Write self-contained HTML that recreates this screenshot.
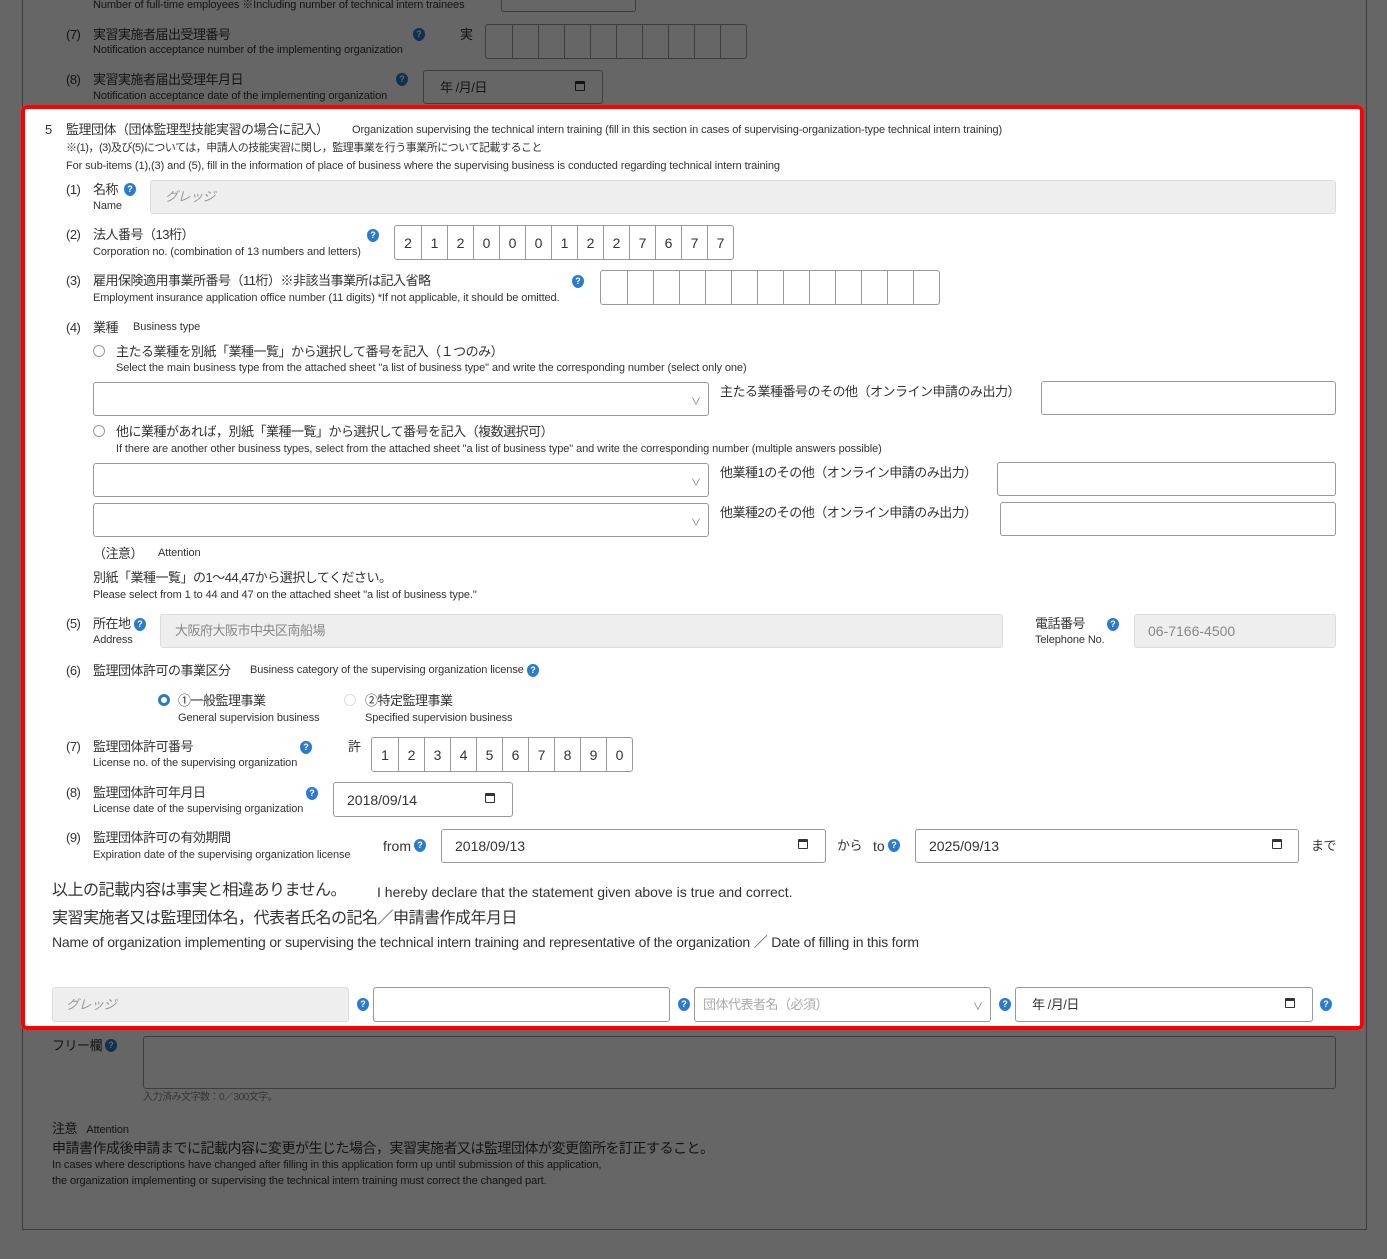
<!DOCTYPE html>
<html><head><meta charset="utf-8">
<style>
*{box-sizing:border-box;margin:0;padding:0}
body{width:1387px;height:1259px;position:relative;overflow:hidden;background:#fff;font-family:"Liberation Sans Narrow","Liberation Sans","Noto Sans CJK JP",sans-serif;color:#333;font-size:13px}
.a{position:absolute;white-space:nowrap;line-height:1}
.s{font-size:11px;letter-spacing:-0.1px}
.j{font-family:"Liberation Sans","Noto Sans CJK JP",sans-serif;font-size:13px;letter-spacing:-0.5px}
.js{font-family:"Liberation Sans","Noto Sans CJK JP",sans-serif;font-size:11px;letter-spacing:-0.5px}
.n{display:inline-block;width:27px}
.box{position:absolute;border:1px solid #999;border-radius:3px;background:#fff}
.g{background:#eee;border-color:#ddd}
.h{position:absolute;width:12px;height:13px;border-radius:50% 50% 50% 50%/45% 45% 55% 55%;background:#2a7bd0;color:#fff;font:bold 9px "Liberation Sans",sans-serif;text-align:center;line-height:13px}
.digits{position:absolute;display:flex;border:1px solid #999;border-radius:3px;background:#fff}
.digits span{width:26px;border-left:1px solid #999;display:flex;align-items:center;justify-content:center;font-size:14px}
.digits span:first-child{border-left:none}
.rad{position:absolute;width:12px;height:12px;border:1px solid #999;border-radius:50%;background:#fff}
.cal{position:absolute;width:10px;height:10px;border:1.5px solid #333;border-top-width:3px;border-radius:1px}
.chev{position:absolute;font-size:10px;color:#777}
.hl{position:absolute;left:21px;top:105px;width:1343px;height:925px;border:4px solid #f00;border-radius:6px;box-shadow:0 0 0 3000px rgba(0,0,0,.6);pointer-events:none}
</style></head><body>

<!-- outside top -->
<div class="box" style="left:501px;top:-6px;width:135px;height:18px"></div>
<div class="a s" style="left:93px;top:0px">Number of full-time employees ※Including number of technical intern trainees</div>
<div class="a j" style="left:66px;top:28px"><span class="n">(7)</span>実習実施者届出受理番号</div>
<div class="a s" style="left:93px;top:45px">Notification acceptance number of the implementing organization</div>
<div class="h" style="left:413px;top:28px">?</div>
<div class="a j" style="left:460px;top:28px">実</div>
<div class="digits" style="left:485px;top:24px;height:35px"><span></span><span></span><span></span><span></span><span></span><span></span><span></span><span></span><span></span><span></span></div>
<div class="a j" style="left:66px;top:73px"><span class="n">(8)</span>実習実施者届出受理年月日</div>
<div class="a s" style="left:93px;top:91px">Notification acceptance date of the implementing organization</div>
<div class="h" style="left:396px;top:73px">?</div>
<div class="box" style="left:423px;top:70px;width:180px;height:34px"></div>
<div class="a j" style="left:440px;top:81px">年 /月/日</div>
<div class="cal" style="left:575px;top:81px"></div>

<!-- outside bottom -->
<div class="a j" style="left:52px;top:1039px">フリー欄</div>
<div class="h" style="left:105px;top:1039px">?</div>
<div class="box" style="left:143px;top:1036px;width:1193px;height:53px"></div>
<div class="a js" style="left:143px;top:1093px;font-size:10px;color:#888">入力済み文字数：0／300文字。</div>
<div class="a j" style="left:52px;top:1122px">注意&nbsp;&nbsp;&nbsp;<span class="s" style="font-family:'Liberation Sans Narrow','Liberation Sans',sans-serif">Attention</span></div>
<div class="a j" style="left:52px;top:1141px;font-size:14px">申請書作成後申請までに記載内容に変更が生じた場合，実習実施者又は監理団体が変更箇所を訂正すること。</div>
<div class="a s" style="left:52px;top:1160px">In cases where descriptions have changed after filling in this application form up until submission of this application,</div>
<div class="a s" style="left:52px;top:1176px">the organization implementing or supervising the technical intern training must correct the changed part.</div>
<div style="position:absolute;left:22px;top:0;width:1345px;height:1230px;border:1px solid #999;border-top:none"></div>

<!-- section 5 -->
<div class="a j" style="left:45px;top:123px"><span style="display:inline-block;width:21px">5</span>監理団体（団体監理型技能実習の場合に記入）</div>
<div class="a s" style="left:352px;top:125px">Organization supervising the technical intern training (fill in this section in cases of supervising-organization-type technical intern training)</div>
<div class="a js" style="left:66px;top:143px">※(1)，(3)及び(5)については，申請人の技能実習に関し，監理事業を行う事業所について記載すること</div>
<div class="a s" style="left:66px;top:161px">For sub-items (1),(3) and (5), fill in the information of place of business where the supervising business is conducted regarding technical intern training</div>

<div class="a j" style="left:66px;top:183px"><span class="n">(1)</span>名称</div>
<div class="h" style="left:124px;top:183px">?</div>
<div class="a s" style="left:93px;top:201px">Name</div>
<div class="box g" style="left:150px;top:180px;width:1186px;height:34px"></div>
<div class="a j" style="left:165px;top:190px;color:#999;font-style:italic">グレッジ</div>

<div class="a j" style="left:66px;top:228px"><span class="n">(2)</span>法人番号（13桁）</div>
<div class="a s" style="left:93px;top:247px">Corporation no. (combination of 13 numbers and letters)</div>
<div class="h" style="left:367px;top:229px">?</div>
<div class="digits" style="left:394px;top:225px;height:35px"><span>2</span><span>1</span><span>2</span><span>0</span><span>0</span><span>0</span><span>1</span><span>2</span><span>2</span><span>7</span><span>6</span><span>7</span><span>7</span></div>

<div class="a j" style="left:66px;top:274px"><span class="n">(3)</span>雇用保険適用事業所番号（11桁）※非該当事業所は記入省略</div>
<div class="a s" style="left:93px;top:293px">Employment insurance application office number (11 digits) *If not applicable, it should be omitted.</div>
<div class="h" style="left:572px;top:275px">?</div>
<div class="digits" style="left:600px;top:270px;height:35px"><span></span><span></span><span></span><span></span><span></span><span></span><span></span><span></span><span></span><span></span><span></span><span></span><span></span></div>

<div class="a j" style="left:66px;top:321px"><span class="n">(4)</span>業種</div>
<div class="a s" style="left:133px;top:322px">Business type</div>
<div class="rad" style="left:93px;top:345px"></div>
<div class="a j" style="left:116px;top:345px">主たる業種を別紙「業種一覧」から選択して番号を記入（１つのみ）</div>
<div class="a s" style="left:116px;top:363px">Select the main business type from the attached sheet "a list of business type" and write the corresponding number (select only one)</div>
<div class="box" style="left:93px;top:382px;width:616px;height:34px"></div><div class="chev" style="left:691px;top:393px">∨</div>
<div class="a j" style="left:720px;top:385px">主たる業種番号のその他（オンライン申請のみ出力）</div>
<div class="box" style="left:1041px;top:381px;width:295px;height:34px"></div>

<div class="rad" style="left:93px;top:425px"></div>
<div class="a j" style="left:116px;top:425px">他に業種があれば，別紙「業種一覧」から選択して番号を記入（複数選択可）</div>
<div class="a s" style="left:116px;top:444px">If there are another other business types, select from the attached sheet "a list of business type" and write the corresponding number (multiple answers possible)</div>
<div class="box" style="left:93px;top:463px;width:616px;height:34px"></div><div class="chev" style="left:691px;top:474px">∨</div>
<div class="a j" style="left:720px;top:466px">他業種1のその他（オンライン申請のみ出力）</div>
<div class="box" style="left:997px;top:462px;width:339px;height:34px"></div>
<div class="box" style="left:93px;top:503px;width:616px;height:34px"></div><div class="chev" style="left:691px;top:514px">∨</div>
<div class="a j" style="left:720px;top:506px">他業種2のその他（オンライン申請のみ出力）</div>
<div class="box" style="left:1000px;top:502px;width:336px;height:34px"></div>

<div class="a j" style="left:93px;top:547px">（注意）</div>
<div class="a s" style="left:158px;top:548px">Attention</div>
<div class="a j" style="left:93px;top:571px">別紙「業種一覧」の1～44,47から選択してください。</div>
<div class="a s" style="left:93px;top:590px">Please select from 1 to 44 and 47 on the attached sheet "a list of business type."</div>

<div class="a j" style="left:66px;top:617px"><span class="n">(5)</span>所在地</div>
<div class="h" style="left:134px;top:618px">?</div>
<div class="a s" style="left:93px;top:635px">Address</div>
<div class="box g" style="left:160px;top:614px;width:843px;height:34px"></div>
<div class="a j" style="left:175px;top:624px;color:#888">大阪府大阪市中央区南船場</div>
<div class="a j" style="left:1035px;top:617px">電話番号</div>
<div class="a s" style="left:1035px;top:635px">Telephone No.</div>
<div class="h" style="left:1107px;top:618px">?</div>
<div class="box g" style="left:1134px;top:614px;width:202px;height:34px"></div>
<div class="a" style="left:1148px;top:624px;color:#888;font-size:14px">06-7166-4500</div>

<div class="a j" style="left:66px;top:664px"><span class="n">(6)</span>監理団体許可の事業区分</div>
<div class="a s" style="left:250px;top:665px">Business category of the supervising organization license</div>
<div class="h" style="left:527px;top:664px">?</div>
<div class="rad" style="left:158px;top:694px;border:3.5px solid #2a7bd0"></div>
<div class="a j" style="left:178px;top:694px">①一般監理事業</div>
<div class="a s" style="left:178px;top:713px">General supervision business</div>
<div class="rad" style="left:344px;top:694px;border-color:#ddd"></div>
<div class="a j" style="left:365px;top:694px">②特定監理事業</div>
<div class="a s" style="left:365px;top:713px">Specified supervision business</div>

<div class="a j" style="left:66px;top:740px"><span class="n">(7)</span>監理団体許可番号</div>
<div class="a s" style="left:93px;top:758px">License no. of the supervising organization</div>
<div class="h" style="left:300px;top:741px">?</div>
<div class="a j" style="left:348px;top:740px">許</div>
<div class="digits" style="left:371px;top:737px;height:35px"><span>1</span><span>2</span><span>3</span><span>4</span><span>5</span><span>6</span><span>7</span><span>8</span><span>9</span><span>0</span></div>

<div class="a j" style="left:66px;top:786px"><span class="n">(8)</span>監理団体許可年月日</div>
<div class="a s" style="left:93px;top:804px">License date of the supervising organization</div>
<div class="h" style="left:306px;top:787px">?</div>
<div class="box" style="left:333px;top:782px;width:180px;height:35px"></div>
<div class="a" style="left:347px;top:793px;font-size:14px">2018/09/14</div>
<div class="cal" style="left:485px;top:793px"></div>

<div class="a j" style="left:66px;top:831px"><span class="n">(9)</span>監理団体許可の有効期間</div>
<div class="a s" style="left:93px;top:850px">Expiration date of the supervising organization license</div>
<div class="a" style="left:383px;top:839px;font-size:14px">from</div>
<div class="h" style="left:414px;top:839px">?</div>
<div class="box" style="left:441px;top:829px;width:385px;height:34px"></div>
<div class="a" style="left:455px;top:839px;font-size:14px">2018/09/13</div>
<div class="cal" style="left:798px;top:839px"></div>
<div class="a j" style="left:837px;top:839px">から</div>
<div class="a" style="left:873px;top:839px;font-size:14px">to</div>
<div class="h" style="left:888px;top:839px">?</div>
<div class="box" style="left:915px;top:829px;width:384px;height:34px"></div>
<div class="a" style="left:929px;top:839px;font-size:14px">2025/09/13</div>
<div class="cal" style="left:1272px;top:839px"></div>
<div class="a j" style="left:1311px;top:839px">まで</div>

<div class="a j" style="left:52px;top:883px;font-size:16px">以上の記載内容は事実と相違ありません。</div>
<div class="a" style="left:377px;top:885px;font-size:14px">I hereby declare that the statement given above is true and correct.</div>
<div class="a j" style="left:52px;top:911px;font-size:16px">実習実施者又は監理団体名，代表者氏名の記名／申請書作成年月日</div>
<div class="a" style="left:52px;top:935px;font-size:14px;letter-spacing:-0.2px">Name of organization implementing or supervising the technical intern training and representative of the organization ／ Date of filling in this form</div>

<div class="box g" style="left:52px;top:987px;width:297px;height:35px"></div>
<div class="a j" style="left:66px;top:998px;color:#999;font-style:italic">グレッジ</div>
<div class="h" style="left:357px;top:998px">?</div>
<div class="box" style="left:373px;top:987px;width:297px;height:35px"></div>
<div class="h" style="left:678px;top:998px">?</div>
<div class="box" style="left:694px;top:987px;width:297px;height:35px"></div>
<div class="a j" style="left:703px;top:998px;color:#aaa">団体代表者名（必須）</div>
<div class="chev" style="left:973px;top:998px">∨</div>
<div class="h" style="left:999px;top:998px">?</div>
<div class="box" style="left:1015px;top:987px;width:298px;height:35px"></div>
<div class="a j" style="left:1032px;top:998px">年 /月/日</div>
<div class="cal" style="left:1285px;top:998px"></div>
<div class="h" style="left:1320px;top:998px">?</div>

<div class="hl"></div>
</body></html>
